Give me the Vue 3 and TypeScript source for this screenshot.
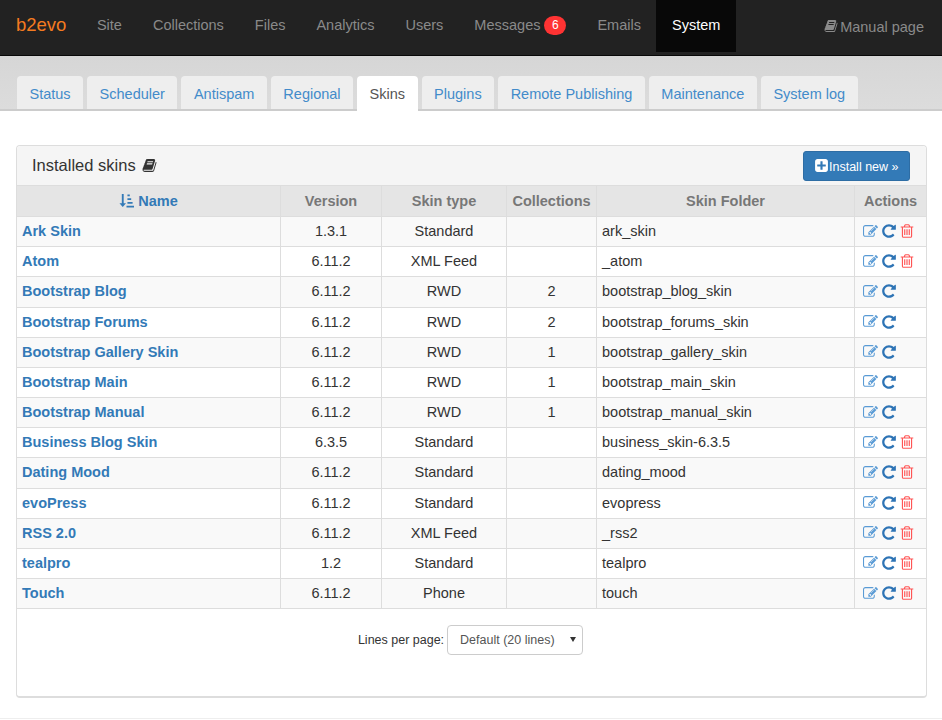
<template>
  <div class="page">
    <nav class="topbar">
      <a class="brand">b2evo</a>
      <ul class="menu">
        <li v-for="m in menu" :key="m" :class="{ active: m === 'System' }">
          {{ m }}<span v-if="m === 'Messages'" class="badge">6</span>
        </li>
      </ul>
      <a class="manual">
        <svg class="ico" viewBox="0 0 1792 1792"><path :d="icons.book" /></svg>Manual page
      </a>
    </nav>

    <div class="tabs_wrap">
      <ul class="tabs">
        <li v-for="t in tabs" :key="t" :class="{ active: t === 'Skins' }">{{ t }}</li>
      </ul>
    </div>

    <section class="panel">
      <header class="panel_head">
        <h2>
          Installed skins
          <svg class="ico book" viewBox="0 0 1792 1792"><path :d="icons.book" /></svg>
        </h2>
        <button class="btn_install">
          <svg class="ico" viewBox="0 0 1792 1792"><path :d="icons.plus" /></svg>Install new »
        </button>
      </header>

      <table class="skins">
        <colgroup>
          <col style="width: 263.5px" />
          <col style="width: 101px" />
          <col style="width: 125px" />
          <col style="width: 90px" />
          <col style="width: 258px" />
          <col style="width: 71.5px" />
        </colgroup>
        <thead>
          <tr>
            <th class="name_head">
              <svg class="sort" viewBox="0 0 16 16">
                <path d="M3 1h2v10h2.500l-3.500 4-3.500-4H3z" />
                <path d="M9 1.500h2.500v2H9zM9 5.500h4v2H9zM9 9.500h5.500v2H9zM8 13.500h8v2H8z" />
              </svg>
              Name
            </th>
            <th>Version</th>
            <th>Skin type</th>
            <th>Collections</th>
            <th>Skin Folder</th>
            <th>Actions</th>
          </tr>
        </thead>
        <tbody>
          <tr v-for="s in skins" :key="s.name">
            <td class="name">{{ s.name }}</td>
            <td class="center">{{ s.version }}</td>
            <td class="center">{{ s.type }}</td>
            <td class="center">{{ s.colls }}</td>
            <td>{{ s.folder }}</td>
            <td class="actions">
              <svg class="act edit" viewBox="0 0 1792 1792"><path :d="icons.edit" /></svg>
              <svg class="act redo" viewBox="0 0 1792 1792"><path :d="icons.repeat" /></svg>
              <svg v-if="!s.colls" class="act trash" viewBox="0 0 1792 1792"><path :d="icons.trash" /></svg>
            </td>
          </tr>
        </tbody>
      </table>

      <div class="pager">
        <label for="lines">Lines per page:</label>
        <div class="select_wrap">
          <select id="lines">
            <option>Default (20 lines)</option>
          </select>
          <span class="caret"></span>
        </div>
      </div>
    </section>

    <div class="foot"></div>
  </div>
</template>

<script setup lang="ts">
interface Skin {
  name: string
  version: string
  type: string
  colls: string
  folder: string
}

const menu = ['Site', 'Collections', 'Files', 'Analytics', 'Users', 'Messages', 'Emails', 'System']
const tabs = ['Status', 'Scheduler', 'Antispam', 'Regional', 'Skins', 'Plugins', 'Remote Publishing', 'Maintenance', 'System log']

const skins: Skin[] = [
  { name: 'Ark Skin', version: '1.3.1', type: 'Standard', colls: '', folder: 'ark_skin' },
  { name: 'Atom', version: '6.11.2', type: 'XML Feed', colls: '', folder: '_atom' },
  { name: 'Bootstrap Blog', version: '6.11.2', type: 'RWD', colls: '2', folder: 'bootstrap_blog_skin' },
  { name: 'Bootstrap Forums', version: '6.11.2', type: 'RWD', colls: '2', folder: 'bootstrap_forums_skin' },
  { name: 'Bootstrap Gallery Skin', version: '6.11.2', type: 'RWD', colls: '1', folder: 'bootstrap_gallery_skin' },
  { name: 'Bootstrap Main', version: '6.11.2', type: 'RWD', colls: '1', folder: 'bootstrap_main_skin' },
  { name: 'Bootstrap Manual', version: '6.11.2', type: 'RWD', colls: '1', folder: 'bootstrap_manual_skin' },
  { name: 'Business Blog Skin', version: '6.3.5', type: 'Standard', colls: '', folder: 'business_skin-6.3.5' },
  { name: 'Dating Mood', version: '6.11.2', type: 'Standard', colls: '', folder: 'dating_mood' },
  { name: 'evoPress', version: '6.11.2', type: 'Standard', colls: '', folder: 'evopress' },
  { name: 'RSS 2.0', version: '6.11.2', type: 'XML Feed', colls: '', folder: '_rss2' },
  { name: 'tealpro', version: '1.2', type: 'Standard', colls: '', folder: 'tealpro' },
  { name: 'Touch', version: '6.11.2', type: 'Phone', colls: '', folder: 'touch' },
]

const icons = {
  book: 'M1703 478q40 57 18 129l-275 906q-19 64-76.500 107.500t-122.500 43.500h-923q-77 0-148.500-53.500t-99.500-131.500q-24-67-2-127 0-4 3-27t4-37q1-8-3-21.500t-3-19.500q2-11 8-21t16.500-23.500 16.500-23.500q23-38 45-91.500t30-91.500q3-10 .5-30t-.5-28q3-11 17-28t17-23q21-36 42-92t25-90q1-9-2.500-32t.5-28q4-13 22-30.500t22-22.500q19-26 42.500-84.500t27.500-96.500q1-8-3-25.500t-2-26.500q2-8 9-18t18-23 17-21q8-12 16.500-30.500t15-35 16-36 19.500-32 26.500-23.500 36-11.500 47.500 5.500l-1 3q38-9 51-9h761q74 0 114 56t18 130l-274 906q-36 119-71.500 153.500t-128.500 34.500h-869q-27 0-38 15-11 16-1 43 24 70 144 70h923q29 0 56-15.500t35-41.500l300-987q7-22 5-57 38 15 59 43zm-1064 2q-4 13 2 22.500t20 9.500h608q13 0 25.500-9.500t16.500-22.500l21-64q4-13-2-22.500t-20-9.500h-608q-13 0-25.500 9.500t-16.500 22.500zm-83 256q-4 13 2 22.500t20 9.500h608q13 0 25.500-9.500t16.500-22.500l21-64q4-13-2-22.500t-20-9.500h-608q-13 0-25.500 9.500t-16.500 22.500z',
  plus: 'M1408 960v-128q0-26-19-45t-45-19h-320v-320q0-26-19-45t-45-19h-128q-26 0-45 19t-19 45v320h-320q-26 0-45 19t-19 45v128q0 26 19 45t45 19h320v320q0 26 19 45t45 19h128q26 0 45-19t19-45v-320h320q26 0 45-19t19-45zm256-544v960q0 119-84.500 203.500t-203.500 84.500h-960q-119 0-203.500-84.500t-84.500-203.500v-960q0-119 84.500-203.500t203.500-84.500h960q119 0 203.500 84.500t84.500 203.500z',
  edit: 'M888 1184l116-116-152-152-116 116v56h96v96h56zm440-720q-16-16-33 1l-350 350q-17 17-1 33t33-1l350-350q17-17 1-33zm80 594v190q0 119-84.500 203.500t-203.500 84.500h-832q-119 0-203.500-84.500t-84.500-203.500v-832q0-119 84.500-203.500t203.500-84.500h832q63 0 117 25 15 7 18 23 3 17-9 29l-49 49q-14 14-32 8-23-6-45-6h-832q-66 0-113 47t-47 113v832q0 66 47 113t113 47h832q66 0 113-47t47-113v-126q0-13 9-22l64-64q15-15 35-7t20 29zm-96-738l288 288-672 672h-288v-288zm444 132l-92 92-288-288 92-92q28-28 68-28t68 28l152 152q28 28 28 68t-28 68z',
  repeat: 'M1664 256v448q0 26-19 45t-45 19h-448q-42 0-59-40-17-39 14-69l138-138q-148-137-349-137-104 0-198.500 40.500t-163.500 109.500-109.500 163.500-40.500 198.500 40.500 198.500 109.500 163.500 163.500 109.500 198.500 40.500q119 0 225-52t179-147q7-10 23-12 14 0 25 9l137 138q9 8 9.500 20.500t-7.500 22.500q-109 132-264 204.500t-327 72.500q-156 0-298-61t-245-164-164-245-61-298 61-298 164-245 245-164 298-61q147 0 284.500 55.500t244.500 156.500l130-129q29-31 70-14 39 17 39 59z',
  trash: 'M704 736v576q0 14-9 23t-23 9h-64q-14 0-23-9t-9-23v-576q0-14 9-23t23-9h64q14 0 23 9t9 23zm256 0v576q0 14-9 23t-23 9h-64q-14 0-23-9t-9-23v-576q0-14 9-23t23-9h64q14 0 23 9t9 23zm256 0v576q0 14-9 23t-23 9h-64q-14 0-23-9t-9-23v-576q0-14 9-23t23-9h64q14 0 23 9t9 23zm128 724v-948h-896v948q0 22 7 40.500t14.500 27 10.500 8.500h832q3 0 10.500-8.500t14.500-27 7-40.500zm-672-1076h448l-48-117q-7-9-17-11h-317q-10 2-17 11zm928 32v64q0 14-9 23t-23 9h-96v948q0 83-47 143.500t-113 60.500h-832q-66 0-113-58.500t-47-141.500v-952h-96q-14 0-23-9t-9-23v-64q0-14 9-23t23-9h309l70-167q15-37 54-63t79-26h320q40 0 79 26t54 63l70 167h309q14 0 23 9t9 23z',
}
</script>

<style>
html, body {
  background: #fff;
  overflow: hidden;
}
</style>

<style scoped>
.page {
  font-family: "Liberation Sans", Arial, sans-serif;
  font-size: 14.5px;
  color: #333;
  height: 720px;
}
.topbar {
  display: flex;
  align-items: flex-start;
  height: 55px;
  background: #222;
  border-bottom: 1px solid #080808;
}
.brand {
  padding: 15px 15px 0 16px;
  font-size: 18.5px;
  line-height: 20px;
  color: #f47b20;
}
.menu {
  display: flex;
  margin: 0;
  padding: 0;
  list-style: none;
  color: #8a8a8a;
}
.menu li {
  height: 52px;
  padding: 0 15.5px;
  line-height: 51px;
}
.menu li.active {
  padding-right: 16px;
  background: #080808;
  color: #fff;
}
.badge {
  display: inline-block;
  min-width: 22px;
  height: 19px;
  margin-left: 4px;
  border-radius: 10px;
  background: #f33;
  color: #fff;
  font-size: 12px;
  line-height: 19px;
  text-align: center;
  vertical-align: 1px;
}
.manual {
  margin-left: auto;
  padding: 17px 18px 0 0;
  line-height: 20px;
  color: #8a8a8a;
}
.manual .ico {
  margin-right: 2px;
}
.ico {
  width: 14px;
  height: 14px;
  fill: currentColor;
  vertical-align: -1px;
}
.tabs_wrap {
  height: 55px;
  padding: 20px 16px 0;
  box-sizing: border-box;
  background: linear-gradient(#d6d6d6, #dcdcdc);
  border-bottom: 2px solid #ccc;
}
.tabs {
  display: flex;
  gap: 4px;
  margin: 0;
  padding: 0 0 0 1px;
  list-style: none;
}
.tabs li {
  height: 33px;
  padding: 0 12.5px;
  border-radius: 4px 4px 0 0;
  background: #eee;
  color: #428bca;
  line-height: 36px;
}
.tabs li.active {
  height: 35px;
  background: #fff;
  color: #555;
}
.panel {
  display: flex;
  flex-direction: column;
  height: 553px;
  box-sizing: border-box;
  margin: 34px 15px 0 16px;
  border: 1px solid #ddd;
  border-bottom-width: 2px;
  border-radius: 4px;
}
.panel_head {
  display: flex;
  align-items: center;
  justify-content: space-between;
  flex: none;
  height: 39px;
  padding: 0 16px 0 15px;
  background: #f5f5f5;
  border-bottom: 1px solid #ddd;
  border-radius: 4px 4px 0 0;
}
.panel_head h2 {
  margin: 0 0 2px;
  font-size: 16.5px;
  font-weight: 400;
  line-height: 20px;
}
.book {
  width: 15px;
  height: 15px;
  margin-left: 2px;
  vertical-align: -2px;
}
.btn_install {
  height: 30px;
  padding: 0 10.5px;
  border: 1px solid #2e6da4;
  border-radius: 3px;
  background: #337ab7;
  color: #fff;
  font: 12.5px "Liberation Sans", Arial, sans-serif;
}
.btn_install .ico {
  width: 15px;
  height: 15px;
  vertical-align: -2px;
}
.skins {
  flex: none;
  width: 909px;
  border-collapse: collapse;
  table-layout: fixed;
  line-height: 20px;
}
.skins th {
  height: 30px;
  padding: 0 5px;
  border: 1px solid #ddd;
  border-top: 0;
  background: #e5e5e5;
  color: #777;
  font-weight: 700;
}
.name_head {
  color: #337ab7 !important;
}
.sort {
  width: 15px;
  height: 15px;
  fill: #337ab7;
  vertical-align: -2px;
}
.skins td {
  height: 28.18px;
  padding: 0 5px 1px;
  border: 1px solid #ddd;
  box-sizing: content-box;
  white-space: nowrap;
}
.skins th:first-child,
.skins td:first-child {
  border-left: 0;
}
.skins th:last-child,
.skins td:last-child {
  border-right: 0;
}
.skins tbody tr:nth-child(odd) {
  background: #f9f9f9;
}
.skins td.name {
  color: #337ab7;
  font-weight: 700;
}
.center {
  text-align: center;
}
.skins td.actions {
  padding-left: 8px;
  padding-right: 0;
  font-size: 0;
}
.act {
  width: 16px;
  height: 16px;
  margin-right: 2px;
  vertical-align: middle;
}
.act.edit {
  width: 15px;
  height: 15px;
  margin-right: 3px;
  fill: #5a9bd5;
}
.redo {
  fill: #2e74b5;
}
.trash {
  fill: #f55;
}
.pager {
  display: flex;
  align-items: center;
  justify-content: center;
  gap: 3px;
  padding: 16px 2px 0 0;
  font-size: 12.5px;
}
.select_wrap {
  position: relative;
  width: 136px;
  height: 30px;
}
.select_wrap select {
  width: 100%;
  height: 100%;
  padding: 0 0 0 12px;
  border: 1px solid #ccc;
  border-radius: 4px;
  background: #fff;
  color: #555;
  font: 12.5px "Liberation Sans", Arial, sans-serif;
  appearance: none;
}
.caret {
  position: absolute;
  top: 12px;
  right: 7px;
  border-top: 5px solid #333;
  border-left: 3px solid transparent;
  border-right: 3px solid transparent;
}
.foot {
  height: 2px;
  margin-top: 20px;
  border-top: 1px solid #eee;
}
</style>
